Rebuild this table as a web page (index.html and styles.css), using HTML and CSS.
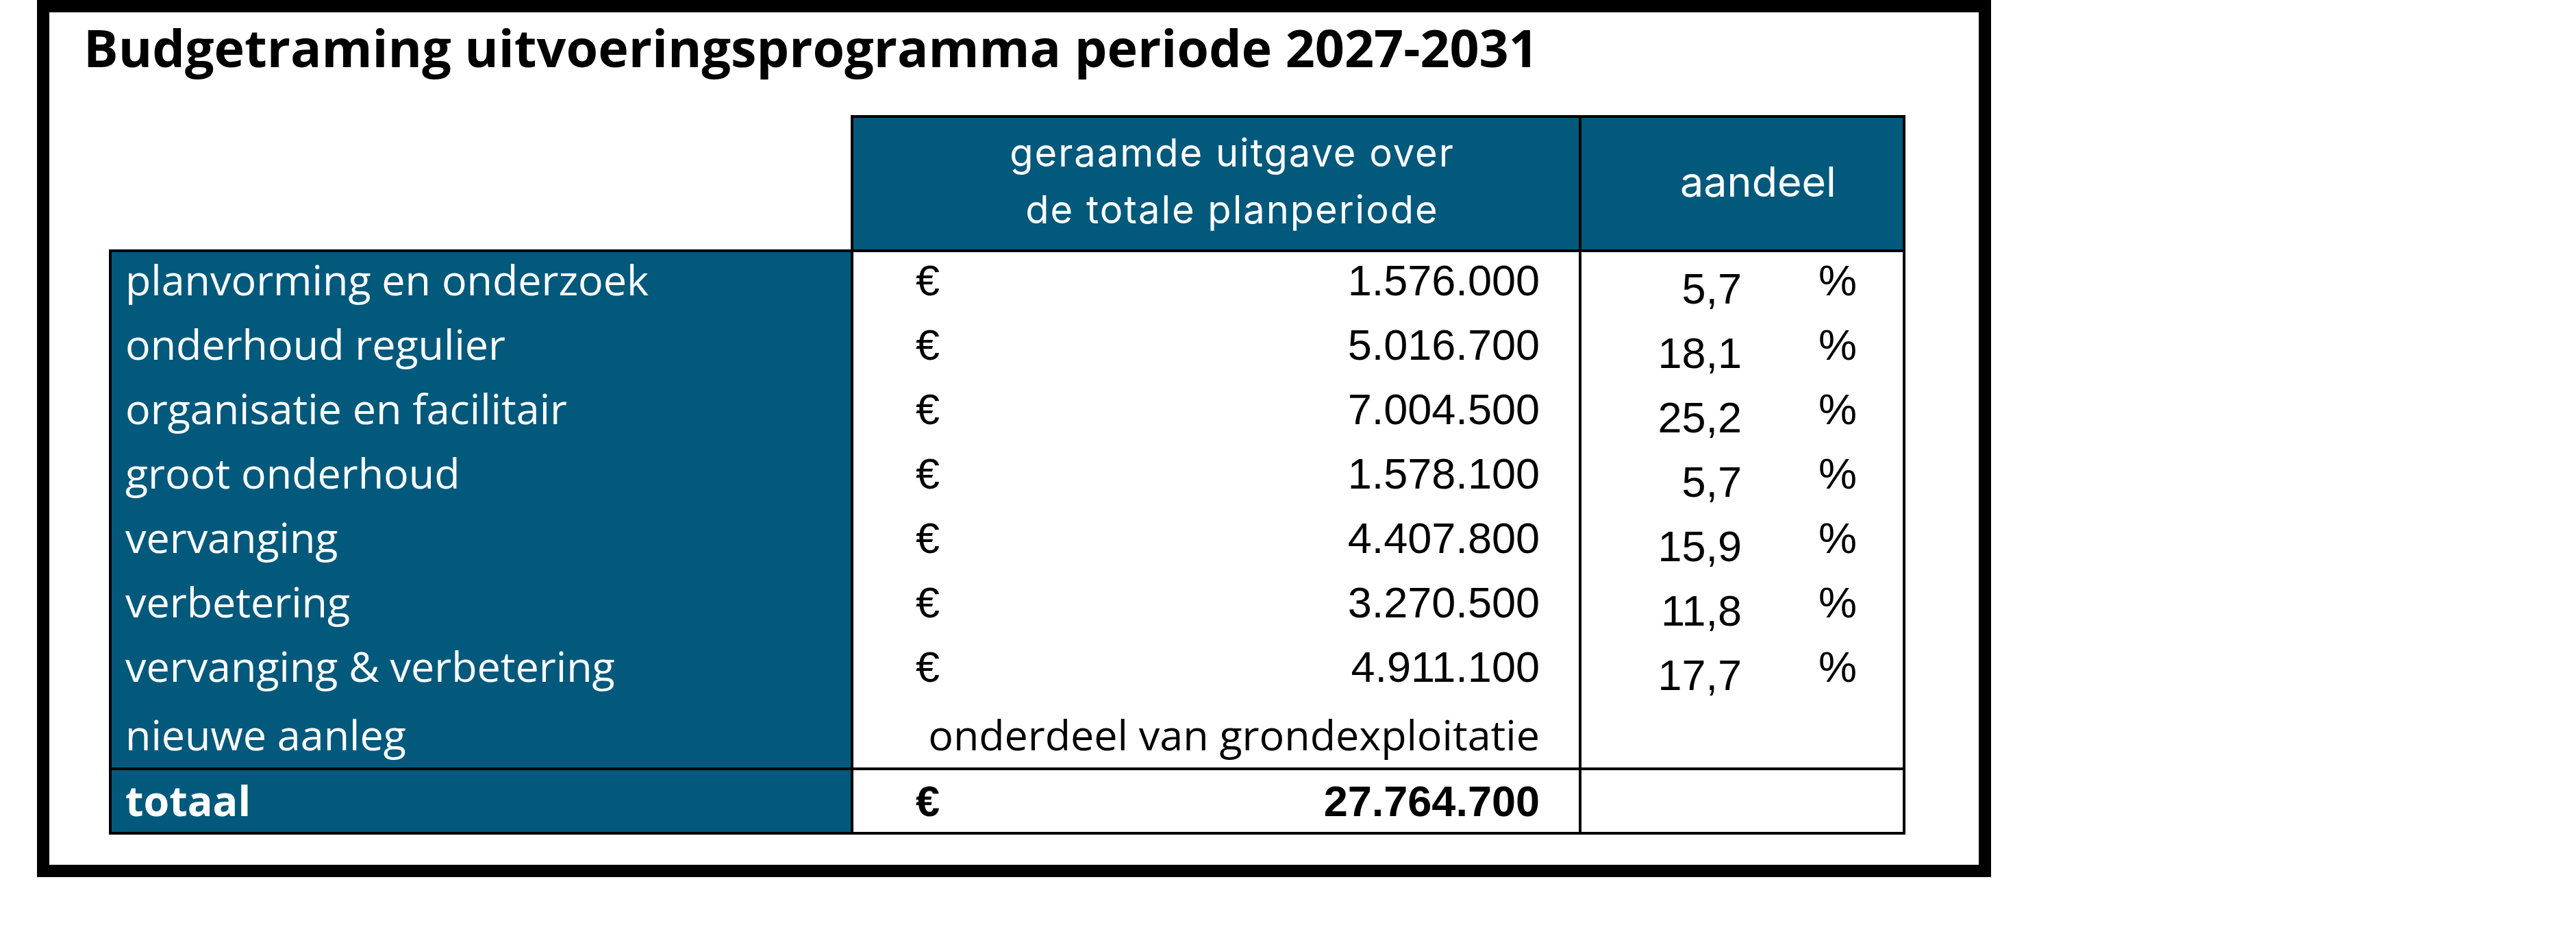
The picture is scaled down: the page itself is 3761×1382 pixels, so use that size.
FILE: index.html
```html
<!DOCTYPE html>
<html lang="nl">
<head>
<meta charset="utf-8">
<title>Budgetraming uitvoeringsprogramma</title>
<link rel="stylesheet" href="styles.css">
</head>
<body>
<div class="page">
  <section class="frame">
    <h1 class="title">Budgetraming uitvoeringsprogramma periode 2027-2031</h1>
    <table class="budget">
      <colgroup><col class="col-label"><col class="col-amount"><col class="col-share"></colgroup>
      <thead>
        <tr>
          <th class="blank"></th>
          <th class="head head-amount">geraamde uitgave over<br>de totale planperiode</th>
          <th class="head head-share">aandeel</th>
        </tr>
      </thead>
      <tbody>
        <tr><td class="label">planvorming en onderzoek</td><td class="amount"><div class="money"><span>€</span><span>1.576.000</span></div></td><td class="share"><span class="num">5,7</span><span class="sign">%</span></td></tr>
        <tr><td class="label">onderhoud regulier</td><td class="amount"><div class="money"><span>€</span><span>5.016.700</span></div></td><td class="share"><span class="num">18,1</span><span class="sign">%</span></td></tr>
        <tr><td class="label">organisatie en facilitair</td><td class="amount"><div class="money"><span>€</span><span>7.004.500</span></div></td><td class="share"><span class="num">25,2</span><span class="sign">%</span></td></tr>
        <tr><td class="label">groot onderhoud</td><td class="amount"><div class="money"><span>€</span><span>1.578.100</span></div></td><td class="share"><span class="num">5,7</span><span class="sign">%</span></td></tr>
        <tr><td class="label">vervanging</td><td class="amount"><div class="money"><span>€</span><span>4.407.800</span></div></td><td class="share"><span class="num">15,9</span><span class="sign">%</span></td></tr>
        <tr><td class="label">verbetering</td><td class="amount"><div class="money"><span>€</span><span>3.270.500</span></div></td><td class="share"><span class="num">11,8</span><span class="sign">%</span></td></tr>
        <tr><td class="label">vervanging &amp; verbetering</td><td class="amount"><div class="money"><span>€</span><span>4.911.100</span></div></td><td class="share"><span class="num">17,7</span><span class="sign">%</span></td></tr>
        <tr class="row-note"><td class="label">nieuwe aanleg</td><td class="amount note">onderdeel van grondexploitatie</td><td class="share"></td></tr>
      </tbody>
      <tfoot>
        <tr class="row-total"><td class="label total-label">totaal</td><td class="amount total-amount"><div class="money"><span>€</span><span>27.764.700</span></div></td><td class="share total-share"></td></tr>
      </tfoot>
    </table>
  </section>
</div>
</body>
</html>
```
FILE: styles.css
```css
* { box-sizing: border-box; }
html, body { margin: 0; background: #fff; }
body { font-family: "Liberation Sans", Arial, sans-serif; color: #000; }

.page { padding-left: 54px; }
.frame {
  width: 2853px;
  height: 1280px;
  border: 18px solid #000;
  padding: 11px 0 0 50px;
}
.title {
  margin: 0;
  font: 700 75.4px/80px "Open Sans", "Noto Sans", sans-serif;
  white-space: nowrap;
}

.budget {
  border-collapse: separate;
  border-spacing: 0;
  table-layout: fixed;
  width: 2623px;
  margin: 59px 0 0 37px;
}
.col-label { width: 1083px; }
.col-amount { width: 1063px; }
.col-share { width: 477px; }

/* header row */
.blank {
  height: 200px;
  padding: 0;
  border-bottom: 4px solid #000;
}
.head {
  height: 200px;
  padding: 0 0 6px 47px;
  background: #02597c;
  color: #fff;
  font-weight: 400;
  text-align: center;
  vertical-align: middle;
  border-top: 4px solid #000;
  border-bottom: 4px solid #000;
  border-left: 4px solid #000;
}
.head-amount { font: 400 56px/83px "Inter", sans-serif; letter-spacing: 2px; }
.head-share { font: 400 61px/83px "Inter", sans-serif; border-right: 4px solid #000; }

/* body rows */
.budget tbody td { height: 94px; vertical-align: bottom; }

.label {
  padding: 0 0 24px 20px;
  background: #02597c;
  color: #fff;
  border-left: 4px solid #000;
  font: 400 61px/61px "Open Sans", "Noto Sans", sans-serif;
  white-space: nowrap;
}
.amount {
  padding: 0 57px 21px 91px;
  border-left: 4px solid #000;
}
.money {
  display: flex;
  justify-content: space-between;
  align-items: baseline;
  font: 400 63px/63px "Liberation Sans", Arial, sans-serif;
}
.share {
  padding: 0 0 9px 0;
  border-left: 4px solid #000;
  border-right: 4px solid #000;
  font: 400 63px/63px "Liberation Sans", Arial, sans-serif;
  white-space: nowrap;
}
.num { display: inline-block; width: 234px; text-align: right; }
.sign { display: inline-block; margin-left: 112px; vertical-align: 12px; }

.note {
  text-align: right;
  font: 400 61px/61px "Open Sans", "Noto Sans", sans-serif;
  white-space: nowrap;
}
.row-note .label,
.row-note .note { padding-bottom: 18px; }

/* total row */
.budget tfoot td {
  height: 98px;
  vertical-align: bottom;
  border-top: 4px solid #000;
  border-bottom: 4px solid #000;
}
.budget .total-label { font-weight: 700; padding-bottom: 16px; }
.budget .total-amount { padding-bottom: 13px; }
.total-amount .money { font-weight: 700; }
.budget .total-share { padding-bottom: 0; }
```
